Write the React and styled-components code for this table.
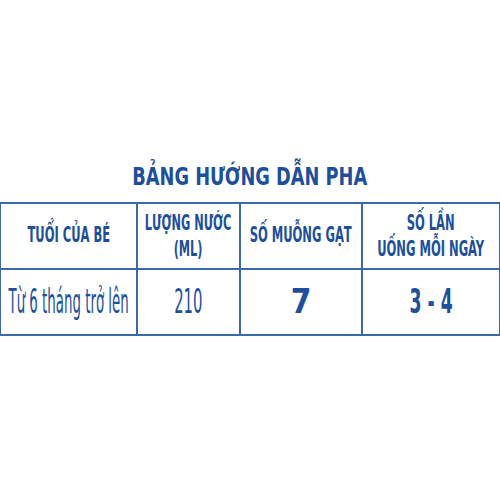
import styled, { createGlobalStyle } from "styled-components";

const Global = createGlobalStyle`
  html, body {
    margin: 0;
    padding: 0;
    background: #ffffff;
  }
  body {
    font-family: "DejaVu Sans Condensed", "DejaVu Sans", sans-serif;
    color: #1d4f9b;
  }
`;

const Page = styled.div`
  width: 500px;
  height: 500px;
  box-sizing: border-box;
  padding-top: 151px;
  display: flex;
  flex-direction: column;
  align-items: center;
`;

const Title = styled.h1`
  margin: 0;
  height: 51px;
  display: flex;
  align-items: center;
  justify-content: center;
  font-size: 25px;
  font-weight: 700;
  white-space: nowrap;
  span {
    display: inline-block;
    transform: scaleX(0.79);
  }
`;

const Table = styled.table`
  width: 500px;
  border-collapse: collapse;
  table-layout: fixed;
`;

const Cell = styled.td`
  height: 64px;
  padding: 0;
  border: 2px solid #3a68a8;
  vertical-align: middle;
  line-height: ${({ lh }) => lh || "1.1"};
  font-size: ${({ size }) => size}px;
  font-weight: ${({ weight }) => weight || 400};
  white-space: nowrap;
`;

const Center = styled.div`
  display: flex;
  justify-content: center;
  text-align: center;
`;

const Squeeze = styled.span`
  flex-shrink: 0;
  display: inline-block;
  transform: scaleX(${({ sx }) => sx});
`;

const cols = [137, 103, 122, 138];

function Text({ sx, children }) {
  return (
    <Center>
      <Squeeze sx={sx}>{children}</Squeeze>
    </Center>
  );
}

export default function App() {
  return (
    <Page>
      <Global />
      <Title>
        <span>BẢNG HƯỚNG DẪN PHA</span>
      </Title>
      <Table>
        <colgroup>
          {cols.map((w, i) => (
            <col key={i} style={{ width: w }} />
          ))}
        </colgroup>
        <tbody>
          <tr>
            <Cell size={21} weight={700}>
              <Text sx={0.61}>TUỔI CỦA BÉ</Text>
            </Cell>
            <Cell size={21} weight={700} lh="1.24">
              <Text sx={0.6}>
                LƯỢNG NƯỚC
                <br />
                (ML)
              </Text>
            </Cell>
            <Cell size={21} weight={700}>
              <Text sx={0.61}>SỐ MUỖNG GẠT</Text>
            </Cell>
            <Cell size={21} weight={700} lh="1.24">
              <Text sx={0.61}>
                SỐ LẦN
                <br />
                UỐNG MỖI NGÀY
              </Text>
            </Cell>
          </tr>
          <tr>
            <Cell size={33}>
              <Text sx={0.45}>Từ 6 tháng trở lên</Text>
            </Cell>
            <Cell size={33}>
              <Text sx={0.5}>210</Text>
            </Cell>
            <Cell size={33} weight={700}>
              <Text sx={1}>7</Text>
            </Cell>
            <Cell size={33} weight={700}>
              <Text sx={0.58}>3 - 4</Text>
            </Cell>
          </tr>
        </tbody>
      </Table>
    </Page>
  );
}
